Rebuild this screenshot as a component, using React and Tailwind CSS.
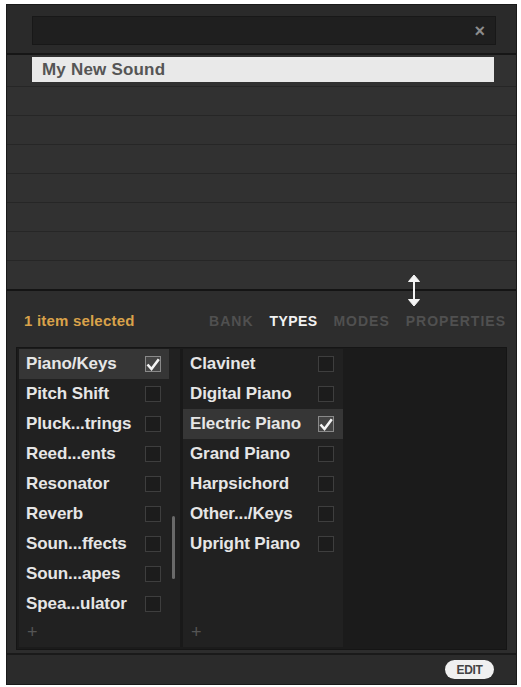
import React from 'react';

const FONT = { fontFamily: '"Liberation Sans", Arial, sans-serif' };

const LEFT = [
    { label: 'Piano/Keys', checked: true },
    { label: 'Pitch Shift' },
    { label: 'Pluck...trings' },
    { label: 'Reed...ents' },
    { label: 'Resonator' },
    { label: 'Reverb' },
    { label: 'Soun...ffects' },
    { label: 'Soun...apes' },
    { label: 'Spea...ulator' },
];

const RIGHT = [
    { label: 'Clavinet' },
    { label: 'Digital Piano' },
    { label: 'Electric Piano', checked: true },
    { label: 'Grand Piano' },
    { label: 'Harpsichord' },
    { label: 'Other.../Keys' },
    { label: 'Upright Piano' },
];

const Check = ({ checked }) => (
    <div className={`w-[16px] h-[16px] shrink-0 flex items-center justify-center border ${checked ? 'border-[#8a8a8a] bg-[#444]' : 'border-[#3e3e3e] bg-[#1c1c1c]'}`}>
        {checked && (
            <svg width="15" height="15" viewBox="0 0 14 14">
                <path d="M1.5 7 L5.5 11.5 L12.8 1.8" fill="none" stroke="#f4f4f4" strokeWidth="2.6" />
            </svg>
        )}
    </div>
);

const Row = ({ label, checked, labelW }) => (
    <div className={`h-[30px] flex items-center pl-[7px] ${checked ? 'bg-[#363636]' : ''}`}>
        <span className={`${labelW} text-[17px] font-bold text-[#e6e6e6] whitespace-nowrap tracking-[-0.1px]`}>{label}</span>
        <Check checked={checked} />
    </div>
);

const Plus = () => (
    <div className="text-[#555] text-[18px] leading-none pl-[8px]">+</div>
);

export default function App() {
    return (
        <div className="w-[521px] h-[687px] bg-white pt-[4px] pl-[6px]" style={FONT}>
            <div className="relative w-[511px] h-[681px] bg-[#242424] flex flex-col border border-[#1a1a1a]">
                {/* Search header */}
                <div className="h-[48px] bg-[#2a2a2a] pt-[11px] pl-[25px] pr-[20px]">
                    <div className="h-[29px] bg-[#1f1f1f] border border-[#181818] flex items-center justify-end pr-[10px]">
                        <span className="text-[#8c8c8c] text-[18px] font-bold leading-none">×</span>
                    </div>
                </div>
                <div className="h-[2px] bg-[#161616]"></div>

                {/* Results list */}
                <div className="h-[234px] bg-[#313131] flex flex-col overflow-hidden">
                    <div className="h-[32px] shrink-0 border-b border-[#262626] pt-[2px] pl-[25px] pr-[22px]">
                        <div className="h-[25px] bg-[#e9e9e9] flex items-center pl-[10px]">
                            <span className="text-[17px] font-bold text-[#555] tracking-[0.2px]">My New Sound</span>
                        </div>
                    </div>
                    {[0, 1, 2, 3, 4, 5, 6].map((i) => (
                        <div key={i} className="h-[29px] border-b border-[#262626] shrink-0"></div>
                    ))}
                </div>
                <div className="h-[2px] bg-[#141414]"></div>

                {/* Resize handle */}
                <div className="absolute left-[399px] top-[269px] flex flex-col items-center">
                    <svg width="16" height="33" viewBox="0 0 16 33">
                        <path d="M8 1 L13.5 7.5 L2.5 7.5 Z" fill="#f4f4f4" strokeLinejoin="round" stroke="#f4f4f4" />
                        <path d="M8 32 L13.5 25.5 L2.5 25.5 Z" fill="#f4f4f4" strokeLinejoin="round" stroke="#f4f4f4" />
                        <rect x="7" y="6" width="2" height="21" fill="#f4f4f4" />
                    </svg>
                </div>

                {/* Lower area */}
                <div className="flex-1 bg-[#2d2d2d] flex flex-col">
                    <div className="h-[56px] flex items-center pl-[17px] pr-[10px] pt-[4px]">
                        <span className="text-[15px] font-bold text-[#d9a24a] tracking-[0.2px]">1 item selected</span>
                        <div className="ml-auto flex items-center gap-[16px] text-[14px] font-bold tracking-[1px]">
                            <span className="text-[#505050]">BANK</span>
                            <span className="text-[#f2f2f2] tracking-[0.4px]">TYPES</span>
                            <span className="text-[#505050]">MODES</span>
                            <span className="text-[#505050]">PROPERTIES</span>
                        </div>
                    </div>

                    <div className="mx-[9px] h-[303px] bg-[#1b1b1b] border border-[#151515] flex px-[2px] pt-[1px] pb-[2px]">
                        {/* Column 1 */}
                        <div className="relative w-[161px] bg-[#212121] flex flex-col">
                            <div className="w-[150px]">
                                {LEFT.map((r) => (
                                    <Row key={r.label} {...r} labelW="w-[119px]" />
                                ))}
                            </div>
                            <div className="absolute left-[153px] top-[167px] w-[3px] h-[63px] bg-[#6a6a6a] rounded-sm"></div>
                            <div className="mt-auto mb-[6px]"><Plus /></div>
                        </div>
                        <div className="w-[3px] bg-[#191919]"></div>
                        {/* Column 2 */}
                        <div className="w-[160px] bg-[#212121] flex flex-col">
                            {RIGHT.map((r) => (
                                <Row key={r.label} {...r} labelW="w-[128px]" />
                            ))}
                            <div className="mt-auto mb-[6px]"><Plus /></div>
                        </div>
                        {/* Column 3 */}
                        <div className="flex-1 bg-[#1b1b1b]"></div>
                    </div>

                    {/* Bottom bar */}
                    <div className="mt-auto h-[31px] border-t-2 border-[#1a1a1a] bg-[#2b2b2b] flex items-center justify-end pr-[22px]">
                        <div className="h-[19px] w-[49px] rounded-full bg-[#f0f0f0] flex items-center justify-center">
                            <span className="text-[12px] font-bold text-[#444] tracking-[-0.3px]">EDIT</span>
                        </div>
                    </div>
                </div>
            </div>
        </div>
    );
}
